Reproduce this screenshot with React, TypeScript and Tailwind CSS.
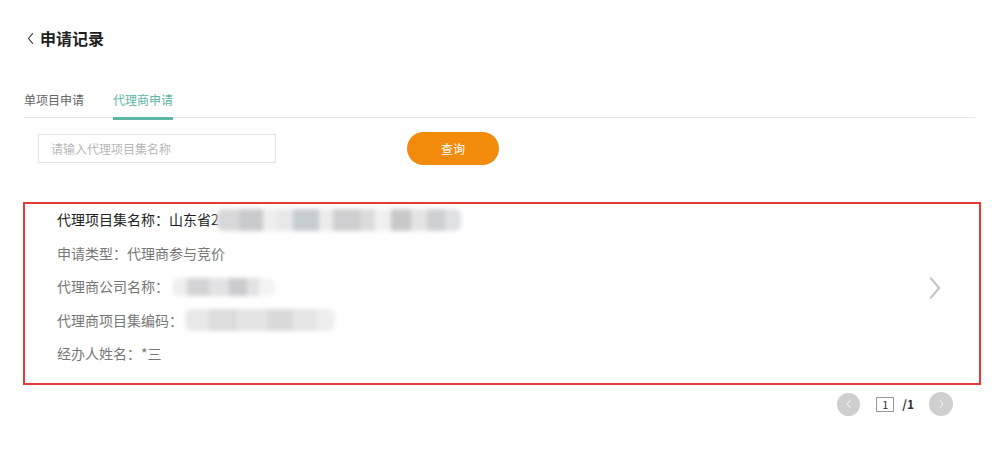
import React from "react";

const Blur = ({ blocks }: { blocks: { w: number; c: string }[] }) => (
  <div className="flex h-full blur-[2px] rounded-[6px] overflow-hidden">
    {blocks.map((b, i) => (
      <div key={i} className="h-full" style={{ width: b.w, backgroundColor: b.c }} />
    ))}
  </div>
);

const Chevron = ({ left, className }: { left?: boolean; className?: string }) => (
  <svg viewBox="0 0 10 16" className={className} fill="none">
    <path
      d={left ? "M8 1 L2 8 L8 15" : "M2 1 L8 8 L2 15"}
      stroke="currentColor"
      strokeWidth="1.6"
      strokeLinecap="round"
      strokeLinejoin="round"
    />
  </svg>
);

const App = () => {
  return (
    <div
      className="w-[1000px] h-[449px] bg-white overflow-hidden pl-[24px]"
      style={{ fontFamily: '"Noto Sans CJK SC", "Noto Sans", sans-serif' }}
    >
      {/* title */}
      <div className="flex items-center pt-[28px] h-[48px]">
        <Chevron left className="w-[7px] h-[11px] ml-[3px] mr-[6px] text-[#333]" />
        <span className="text-[16px] leading-[20px] font-bold text-[#1f1f1f]">申请记录</span>
      </div>

      {/* tabs */}
      <div className="mt-[44px] mr-[25px] flex gap-[29px] border-b border-[#e8e8e8]">
        <div className="pb-[9px] text-[12px] leading-[16px] text-[#666]">单项目申请</div>
        <div className="relative pb-[9px] text-[12px] leading-[16px] text-[#5db5a3]">
          代理商申请
          <div className="absolute left-0 right-0 bottom-[-3px] h-[3px] bg-[#5db5a3]" />
        </div>
      </div>

      {/* search */}
      <div className="mt-[14px] ml-[14px] flex items-center h-[33px] gap-[131px]">
        <div className="w-[238px] h-[29px] border border-[#e3e3e3] flex items-center pl-[12px] text-[12px] text-[#b8b8b8]">
          请输入代理项目集名称
        </div>
        <button className="w-[92px] h-[33px] rounded-full bg-[#f28b0c] text-white text-[12px]">
          查询
        </button>
      </div>

      {/* record card */}
      <div className="mt-[37px] -ml-[1px] w-[958px] h-[183px] border-2 border-[#e53a35] flex justify-between items-center pr-[37px]">
        <div className="pl-[32px] -mt-[1px] self-start text-[14px]">
          <div className="h-[33.5px] flex items-center text-[#222]">
            代理项目集名称：山东省2
            <div className="h-[22px] -ml-[2px]">
              <Blur
                blocks={[
                  { w: 22, c: "#d8d8da" },
                  { w: 24, c: "#c9cacc" },
                  { w: 14, c: "#eeeeee" },
                  { w: 16, c: "#e6e8ea" },
                  { w: 26, c: "#c7ccd2" },
                  { w: 14, c: "#ececec" },
                  { w: 28, c: "#cfcfd1" },
                  { w: 14, c: "#dcdcdc" },
                  { w: 16, c: "#f0f0f0" },
                  { w: 20, c: "#c8c8ca" },
                  { w: 16, c: "#e4e4e4" },
                  { w: 18, c: "#cfd0d4" },
                  { w: 16, c: "#dfe1e4" },
                ]}
              />
            </div>
          </div>
          <div className="h-[33.5px] flex items-center text-[#777]">申请类型：代理商参与竞价</div>
          <div className="h-[33.5px] flex items-center text-[#777]">
            代理商公司名称：
            <div className="h-[18px] ml-[4px]">
              <Blur
                blocks={[
                  { w: 14, c: "#eeeeee" },
                  { w: 22, c: "#d4d4d6" },
                  { w: 20, c: "#e2e2e4" },
                  { w: 18, c: "#cbcbcf" },
                  { w: 12, c: "#e2e2e2" },
                  { w: 16, c: "#f3f3f3" },
                ]}
              />
            </div>
          </div>
          <div className="h-[33.5px] flex items-center text-[#777]">
            代理商项目集编码：
            <div className="h-[22px] ml-[2px]">
              <Blur
                blocks={[
                  { w: 24, c: "#e8e8e8" },
                  { w: 28, c: "#dcdcdc" },
                  { w: 30, c: "#e4e4e4" },
                  { w: 26, c: "#dadada" },
                  { w: 24, c: "#e6e6e6" },
                  { w: 18, c: "#eeeeee" },
                ]}
              />
            </div>
          </div>
          <div className="h-[33.5px] flex items-center text-[#777]">经办人姓名：*三</div>
        </div>
        <Chevron className="w-[14px] h-[22px] mb-[11px] text-[#c4c4c4]" />
      </div>

      {/* pagination */}
      <div className="mt-[7px] w-[957px] flex justify-end items-center pr-[28px]">
        <div className="w-[23px] h-[23px] rounded-full bg-[#cfcfcf] flex items-center justify-center text-white">
          <Chevron left className="w-[5px] h-[8px]" />
        </div>
        <div className="ml-[16px] w-[18px] h-[15px] border border-[#999] flex items-center justify-center text-[11px] leading-none text-[#333]">
          1
        </div>
        <div className="ml-[8px] text-[12px] font-bold text-[#333]">/1</div>
        <div className="ml-[15px] w-[24px] h-[24px] rounded-full bg-[#cfcfcf] flex items-center justify-center text-white">
          <Chevron className="w-[5px] h-[8px]" />
        </div>
      </div>
    </div>
  );
};

export default App;
